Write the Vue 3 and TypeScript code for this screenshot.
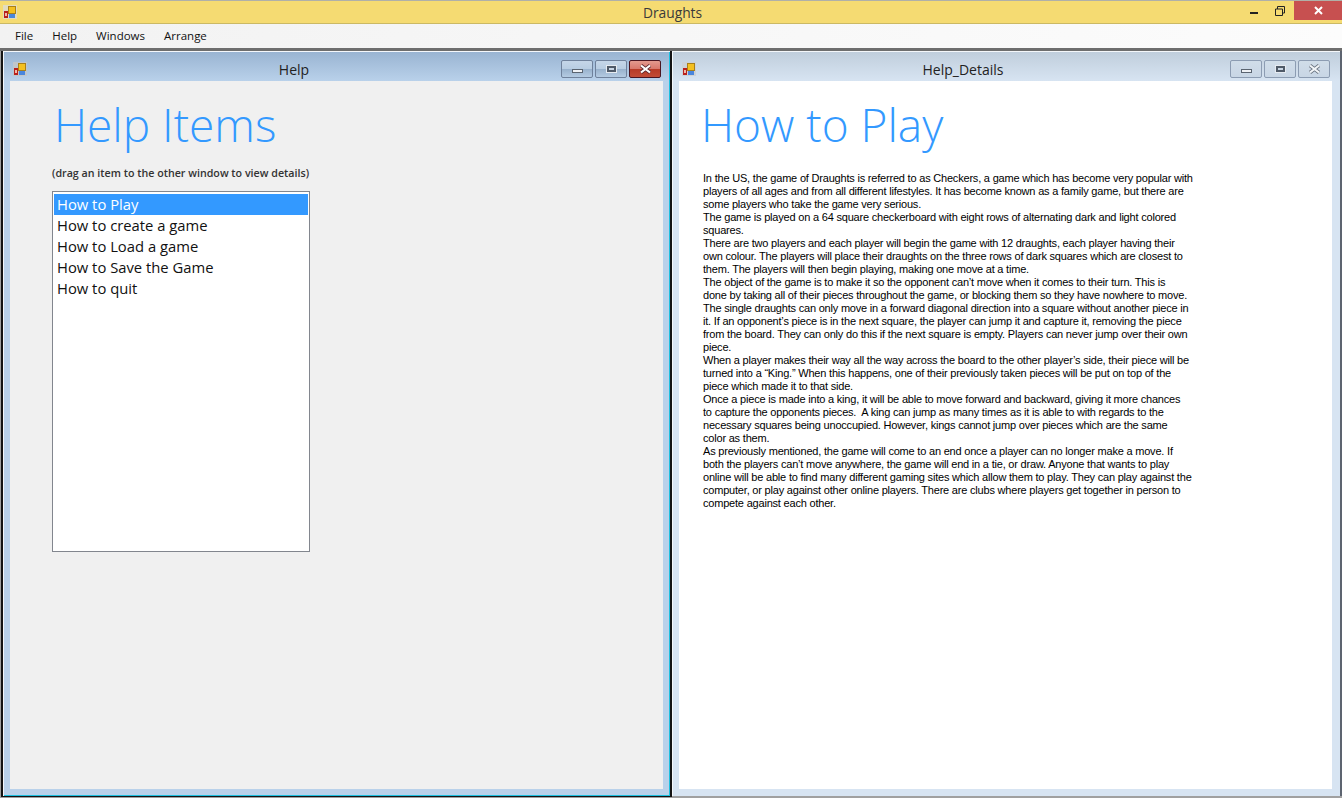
<script setup lang="ts">
const menus: string[] = ['File', 'Help', 'Windows', 'Arrange']
const topics: string[] = ['How to Play', 'How to create a game', 'How to Load a game', 'How to Save the Game', 'How to quit']

const lines: string[] = [
  'In the US, the game of Draughts is referred to as Checkers, a game which has become very popular with',
  'players of all ages and from all different lifestyles. It has become known as a family game, but there are',
  'some players who take the game very serious.',
  'The game is played on a 64 square checkerboard with eight rows of alternating dark and light colored',
  'squares.',
  'There are two players and each player will begin the game with 12 draughts, each player having their',
  'own colour. The players will place their draughts on the three rows of dark squares which are closest to',
  'them. The players will then begin playing, making one move at a time.',
  'The object of the game is to make it so the opponent can’t move when it comes to their turn. This is',
  'done by taking all of their pieces throughout the game, or blocking them so they have nowhere to move.',
  'The single draughts can only move in a forward diagonal direction into a square without another piece in',
  'it. If an opponent’s piece is in the next square, the player can jump it and capture it, removing the piece',
  'from the board. They can only do this if the next square is empty. Players can never jump over their own',
  'piece.',
  'When a player makes their way all the way across the board to the other player’s side, their piece will be',
  'turned into a “King.” When this happens, one of their previously taken pieces will be put on top of the',
  'piece which made it to that side.',
  'Once a piece is made into a king, it will be able to move forward and backward, giving it more chances',
  'to capture the opponents pieces.  A king can jump as many times as it is able to with regards to the',
  'necessary squares being unoccupied. However, kings cannot jump over pieces which are the same',
  'color as them.',
  'As previously mentioned, the game will come to an end once a player can no longer make a move. If',
  'both the players can’t move anywhere, the game will end in a tie, or draw. Anyone that wants to play',
  'online will be able to find many different gaming sites which allow them to play. They can play against the',
  'computer, or play against other online players. There are clubs where players get together in person to',
  'compete against each other.',
]
</script>

<template>
  <div class="app">
    <header class="titlebar">
      <svg class="form-icon" width="14" height="14" viewBox="0 0 14 14">
        <rect width="14" height="14" fill="#e2dcc0" />
        <rect x="1" y="6" width="4" height="7" fill="#b8201c" />
        <rect x="2" y="8" width="2" height="3" fill="#f0b8a8" />
        <rect x="5.5" y="1.5" width="7" height="7" fill="#f4c020" stroke="#a8801a" />
        <rect x="6" y="9" width="6" height="4" fill="#4a86dc" />
      </svg>
      <span class="titlebar__text">Draughts</span>
      <div class="caption">
        <span class="caption__min"></span>
        <svg class="caption__max" width="10" height="10" viewBox="0 0 10 10">
          <path d="M0.5 3 H7.5 V9.5 H0.5 Z M2.5 3 V0.5 H9.5 V7 H7.5" fill="none" stroke="#222" />
        </svg>
        <span class="caption__close">
          <svg width="9" height="9" viewBox="0 0 9 9">
            <path d="M1 1 L8 8 M8 1 L1 8" stroke="#fff" stroke-width="2" />
          </svg>
        </span>
      </div>
    </header>

    <nav class="menubar">
      <span v-for="menu in menus" :key="menu" class="menubar__item">{{ menu }}</span>
    </nav>

    <main class="mdi">
      <section class="win win--active">
        <div class="win__title">
          <svg class="form-icon" width="14" height="14" viewBox="0 0 14 14">
            <rect width="14" height="14" fill="#c0c6cc" />
            <rect x="1" y="6" width="4" height="7" fill="#b8201c" />
            <rect x="2" y="8" width="2" height="3" fill="#f0b8a8" />
            <rect x="5.5" y="1.5" width="7" height="7" fill="#f4c020" stroke="#a8801a" />
            <rect x="6" y="9" width="6" height="4" fill="#4a86dc" />
          </svg>
          <span class="win__name">Help</span>
          <div class="win__btns">
            <span class="wbtn"><i class="glyph-min"></i></span>
            <span class="wbtn"><i class="glyph-max"></i></span>
            <span class="wbtn wbtn--close">
              <svg width="13" height="10" viewBox="0 0 13 10">
                <path d="M2 1.5 L11 8.5 M11 1.5 L2 8.5" stroke="#5a2a30" stroke-width="3.6" />
                <path d="M2 1.5 L11 8.5 M11 1.5 L2 8.5" stroke="#fff" stroke-width="2.2" />
              </svg>
            </span>
          </div>
        </div>
        <div class="win__client win__client--grey">
          <h1 class="heading">Help Items</h1>
          <p class="hint">(drag an item to the other window to view details)</p>
          <ul class="listbox">
            <li
              v-for="(topic, i) in topics"
              :key="topic"
              class="listbox__row"
              :class="{ 'is-selected': i === 0 }"
            >{{ topic }}</li>
          </ul>
        </div>
      </section>

      <section class="win win--idle">
        <div class="win__title">
          <svg class="form-icon" width="14" height="14" viewBox="0 0 14 14">
            <rect width="14" height="14" fill="#ccd2d8" />
            <rect x="1" y="6" width="4" height="7" fill="#b8201c" />
            <rect x="2" y="8" width="2" height="3" fill="#f0b8a8" />
            <rect x="5.5" y="1.5" width="7" height="7" fill="#f4c020" stroke="#a8801a" />
            <rect x="6" y="9" width="6" height="4" fill="#4a86dc" />
          </svg>
          <span class="win__name">Help_Details</span>
          <div class="win__btns">
            <span class="wbtn"><i class="glyph-min"></i></span>
            <span class="wbtn"><i class="glyph-max"></i></span>
            <span class="wbtn">
              <svg width="13" height="10" viewBox="0 0 13 10">
                <path d="M2 1.5 L11 8.5 M11 1.5 L2 8.5" stroke="#6a7480" stroke-width="3.6" />
                <path d="M2 1.5 L11 8.5 M11 1.5 L2 8.5" stroke="#f2f5f8" stroke-width="2.2" />
              </svg>
            </span>
          </div>
        </div>
        <div class="win__client">
          <h1 class="heading heading--detail">How to Play</h1>
          <div class="article">
            <div v-for="(line, i) in lines" :key="i" class="article__line">{{ line }}</div>
          </div>
        </div>
      </section>
    </main>
  </div>
</template>

<style>
html,
body {
  margin: 0;
  overflow: hidden;
}
</style>

<style scoped>
.app {
  width: 1342px;
  height: 798px;
  display: flex;
  flex-direction: column;
  font-family: 'Open Sans', 'Noto Sans', sans-serif;
  color: #111;
}

.titlebar {
  height: 24px;
  box-sizing: border-box;
  display: grid;
  grid-template-columns: 1fr auto 1fr;
  align-items: center;
  padding-left: 3px;
  background: #f5db72;
  border-top: 1px solid #b0b0a8;
  border-bottom: 1px solid #cbb964;
}

.titlebar__text {
  font-size: 13.8px;
  color: #3a3a3a;
}

.caption {
  justify-self: end;
  align-self: start;
  display: flex;
  align-items: center;
  height: 19px;
}

.caption__min {
  width: 8px;
  height: 2px;
  background: #222;
  margin-right: 17px;
  margin-top: 5px;
}

.caption__max {
  margin-right: 9px;
}

.caption__close {
  width: 48px;
  height: 19px;
  background: #c75050;
  display: flex;
  align-items: center;
  justify-content: center;
}

.menubar {
  height: 24px;
  box-sizing: border-box;
  display: flex;
  align-items: center;
  gap: 19px;
  padding: 0 0 2px 15px;
  background: linear-gradient(90deg, #f2f2f2, #fcfcfc);
  font-size: 11.5px;
}

.mdi {
  flex: 1;
  display: flex;
  padding: 0 0 1px 1px;
  background: #a0a0a0;
  border-top: 3px solid #6e6e6e;
}

.win {
  display: flex;
  flex-direction: column;
  box-sizing: border-box;
  padding: 1px 8px 7px 7px;
}

.win--active {
  width: 671px;
  padding-right: 7px;
  border: solid #141414;
  border-width: 0 2px 1px;
  background: linear-gradient(#98b3d1 0, #b9d1ea 30px);
  box-shadow: inset 1px 1px 0 #f4f7fb, inset -1px -1px 0 #1cc0e0;
}

.win--idle {
  width: 670px;
  margin-bottom: 1px;
  border-right: 2px solid #5d6470;
  background: linear-gradient(#bfcddb 0, #d7e4f2 30px);
  box-shadow: inset 1px 1px 0 #f4f7fa;
}

.win__title {
  height: 29px;
  box-sizing: border-box;
  flex: none;
  display: flex;
  align-items: center;
  padding: 5px 2px 0 3px;
}

.form-icon {
  flex: none;
}

.win__name {
  flex: 1;
  text-align: center;
  font-size: 14px;
  color: #222;
}

.win__btns {
  align-self: flex-end;
  margin-bottom: 3px;
  display: flex;
  gap: 2px;
}

.wbtn {
  width: 32px;
  height: 18px;
  box-sizing: border-box;
  display: flex;
  align-items: center;
  justify-content: center;
  border: 1px solid #6f819b;
  border-radius: 2px;
  background: linear-gradient(#c5d6e8 0, #b8cde2 50%, #98b1cc 51%, #b4cbe2 100%);
}

.win--idle .wbtn {
  border-color: #8c9cb2;
  background: linear-gradient(#d0dde9, #c8d6e5);
}

.wbtn--close {
  border-color: #4a1520;
  background: linear-gradient(#e39a8e 0, #d8776a 50%, #b73a26 51%, #c24c36 100%);
}

.glyph-min {
  display: block;
  width: 9px;
  height: 2px;
  margin-top: 3px;
  background: #eef1f5;
  border: 1px solid #5a6470;
}

.glyph-max {
  display: block;
  width: 5px;
  height: 2px;
  background: #c9d6e4;
  border: 2px solid #4f5a68;
  outline: 1px solid #e6ebf1;
}

.win__client {
  flex: 1;
  background: #fff;
  padding-left: 24px;
}

.win__client--grey {
  background: #f0f0f0;
  padding-left: 42px;
}

.heading {
  margin: 0 0 0 2px;
  font-weight: 300;
  font-size: 46px;
  line-height: 64px;
  padding: 11px 0 1px;
  color: #3399ff;
}

.heading--detail {
  margin-left: -2px;
}

.hint {
  margin: 9px 0 0;
  font-size: 10.7px;
  font-weight: 600;
  line-height: 14px;
  color: #333;
}

.listbox {
  list-style: none;
  margin: 11px 0 0;
  padding: 2px 1px;
  box-sizing: border-box;
  width: 258px;
  height: 361px;
  background: #fff;
  border: 1px solid #82868e;
}

.listbox__row {
  height: 21px;
  line-height: 21px;
  padding-left: 3px;
  font-size: 14.8px;
  color: #111;
}

.listbox__row.is-selected {
  background: #3399ff;
  color: #fff;
}

.article {
  margin-top: 15px;
  font-family: 'Liberation Sans', Arial, sans-serif;
  font-size: 11px;
  line-height: 13px;
  letter-spacing: -0.2px;
  color: #000;
}

.article__line {
  white-space: pre;
}
</style>
